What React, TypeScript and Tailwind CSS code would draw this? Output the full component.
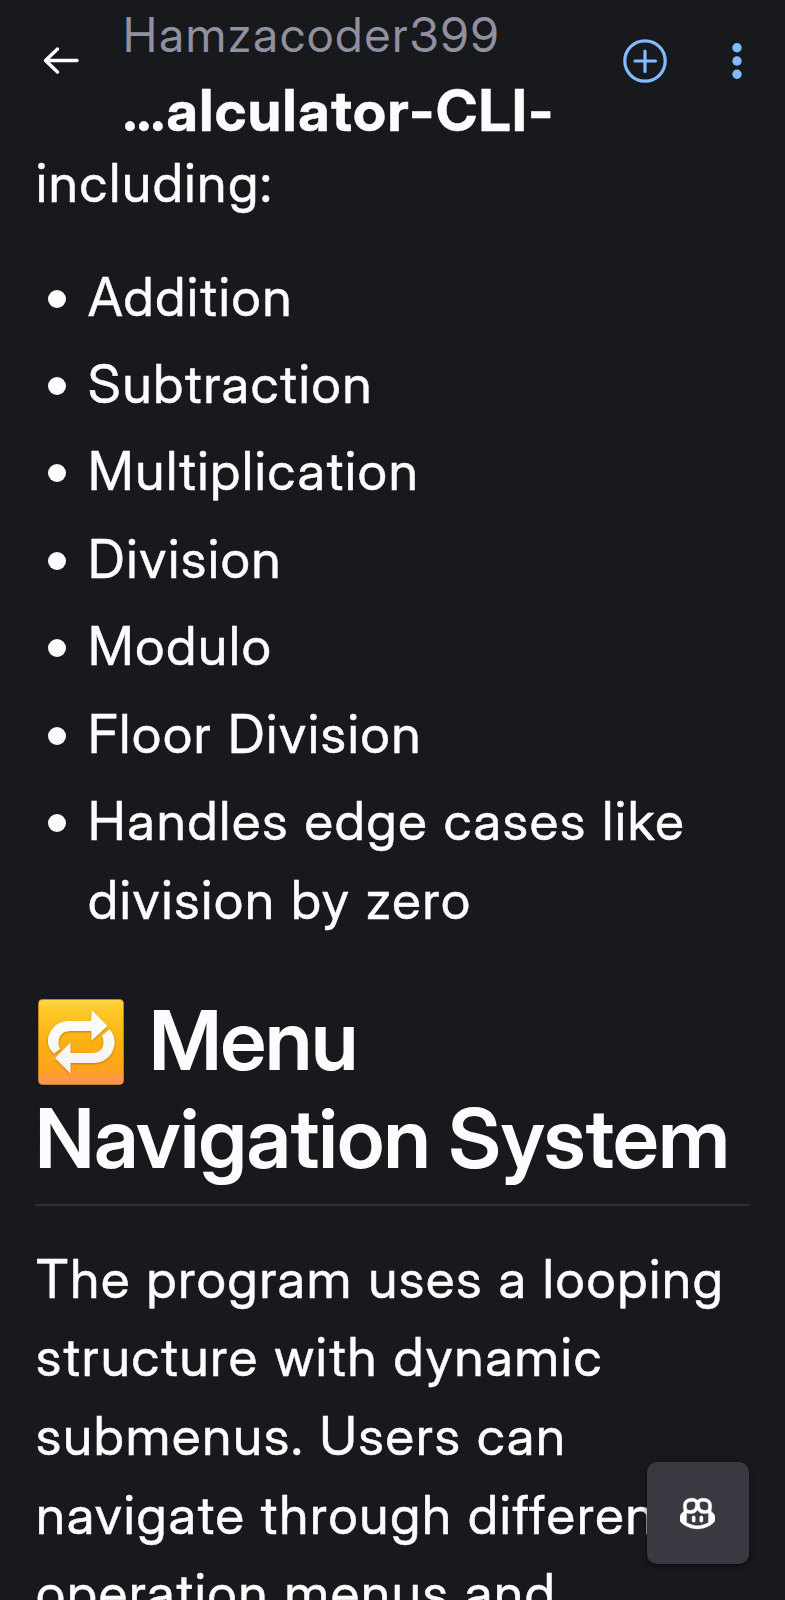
import React from "react";

const operations = [
  "Addition",
  "Subtraction",
  "Multiplication",
  "Division",
  "Modulo",
  "Floor Division",
  "Handles edge cases like division by zero",
];

function BackIcon() {
  return (
    <svg className="h-[30px] w-[38px]" viewBox="0 0 38 30" fill="none" stroke="#fff" strokeWidth="3.4" strokeLinecap="round" strokeLinejoin="round">
      <path d="M35 14.500H4M15.500 3 3.500 14.500l12 11.500" />
    </svg>
  );
}

function PlusCircleIcon() {
  return (
    <svg className="size-[44px]" viewBox="0 0 44 44" fill="none" stroke="#82bbff" strokeWidth="3.2">
      <circle cx="22" cy="22" r="20.2" />
      <path d="M22 12v20.500M12 22h20.500" strokeLinecap="round" />
    </svg>
  );
}

function KebabIcon() {
  return (
    <svg className="h-[38px] w-[10px]" viewBox="0 0 10 38" fill="#82bbff">
      <circle cx="5" cy="5.7" r="4.7" />
      <circle cx="5" cy="19" r="4.7" />
      <circle cx="5" cy="32.3" r="4.7" />
    </svg>
  );
}

function CopilotIcon() {
  return (
    <svg className="mr-[1px] size-[35px]" viewBox="0 0 16 16" fill="#fff" stroke="#fff" strokeWidth="0.15">
      <path d="M7.998 15.035c-4.562 0-7.873-2.914-7.998-3.749V9.338c.085-.628.677-1.686 1.588-2.065.013-.07.024-.143.036-.218.029-.183.06-.384.126-.612-.201-.508-.254-1.084-.254-1.656 0-.87.128-1.769.693-2.484.579-.733 1.494-1.124 2.724-1.261 1.206-.134 2.262.034 2.944.765.05.053.096.108.139.165.044-.057.094-.112.143-.165.682-.731 1.738-.899 2.944-.765 1.23.137 2.145.528 2.724 1.261.566.715.693 1.614.693 2.484 0 .572-.053 1.148-.254 1.656.066.228.098.429.126.612.012.076.024.148.037.218.924.385 1.522 1.471 1.591 2.095v1.872c0 .766-3.351 3.795-8.002 3.795Zm0-1.485c2.28 0 4.584-1.11 5.002-1.433V7.862l-.023-.116c-.49.21-1.075.291-1.727.291-1.146 0-2.059-.327-2.71-.991A3.222 3.222 0 0 1 8 6.303a3.24 3.24 0 0 1-.544.743c-.65.664-1.563.991-2.71.991-.652 0-1.236-.081-1.727-.291l-.023.116v4.255c.419.323 2.722 1.433 5.002 1.433ZM6.762 2.83c-.193-.206-.637-.413-1.682-.297-1.019.113-1.479.404-1.713.7-.247.312-.369.789-.369 1.554 0 .793.129 1.171.308 1.371.162.181.519.379 1.442.379.853 0 1.339-.235 1.638-.54.315-.322.527-.827.617-1.553.117-.935-.037-1.395-.241-1.614Zm4.155-.297c-1.044-.116-1.488.091-1.681.297-.204.219-.359.679-.242 1.614.091.726.303 1.231.618 1.553.299.305.784.54 1.638.54.922 0 1.28-.198 1.442-.379.179-.2.308-.578.308-1.371 0-.765-.123-1.242-.37-1.554-.233-.296-.693-.587-1.713-.7Z" />
      <path d="M6.25 9.037a.75.75 0 0 1 .75.75v1.501a.75.75 0 0 1-1.5 0V9.787a.75.75 0 0 1 .75-.75Zm4.25.75v1.501a.75.75 0 0 1-1.5 0V9.787a.75.75 0 0 1 1.5 0Z" />
    </svg>
  );
}

function RepeatEmoji() {
  return (
    <svg className="mt-[3px] size-[86px] shrink-0" viewBox="0 0 86 86" role="img" aria-label="repeat">
      <defs>
        <linearGradient id="tile" x1="0" y1="0" x2="0" y2="1">
          <stop offset="0" stopColor="#ffd54a" />
          <stop offset="0.12" stopColor="#ffca28" />
          <stop offset="0.5" stopColor="#fbb012" />
          <stop offset="0.82" stopColor="#ffa41c" />
          <stop offset="1" stopColor="#ff8f5e" />
        </linearGradient>
        <linearGradient id="arrow" x1="0" y1="12" x2="0" y2="74" gradientUnits="userSpaceOnUse">
          <stop offset="0" stopColor="#fff" />
          <stop offset="1" stopColor="#f1f1f1" />
        </linearGradient>
        <filter id="soft" x="-10%" y="-10%" width="120%" height="130%">
          <feDropShadow dx="0" dy="1" stdDeviation="1" floodColor="#8a5a00" floodOpacity="0.6" />
        </filter>
      </defs>
      <rect x="0.5" y="0.5" width="85" height="85" rx="4" fill="url(#tile)" stroke="#c98a1e" strokeWidth="0.8" />
      <g fill="url(#arrow)" filter="url(#soft)">
        <path d="M54 11.500 69.500 27 53.500 41.500V32H32C25 32 20.500 36.500 20.500 43.500C20.500 46 21 48 22 50L16 54.500C12 51 10 47 10 42.500C10 31 19 22 31 22H53Z" />
        <path d="M32.500 74.500 17 59 32.500 43.500V54H54.500C61 54 65.500 50 65.500 43.500C65.500 41 65 38.500 64 36.500L71.500 30.500C75 34 76.500 38 76.500 43C76.500 55 67.500 64 55.500 64H32.500Z" />
      </g>
    </svg>
  );
}

export default function App() {
  return (
    <div className="relative h-[1600px] w-[785px] overflow-hidden bg-[#18191d] text-[#fcfcfe] [font-family:'Inter_Display',Inter,sans-serif]">
      <header className="flex h-[157px] items-start border-b border-[#15161a] bg-[#18191d]">
        <div className="ml-[42px] mt-[46px] w-[81px] shrink-0">
          <BackIcon />
        </div>
        <div className="w-[500px] shrink-0 whitespace-nowrap pt-[6px]">
          <p className="text-[48px] font-normal leading-[58px] tracking-[2px] text-[#9090a0]">Hamzacoder399</p>
          <p className="mt-[18px] text-[57px] font-bold leading-[58px] tracking-[1.45px] [-webkit-text-stroke:0.4px_#fcfcfe]">…alculator-CLI-</p>
        </div>
        <div className="mt-[39px]">
          <PlusCircleIcon />
        </div>
        <div className="ml-[65px] mt-[42px]">
          <KebabIcon />
        </div>
      </header>

      <main className="-mt-[13px] px-[35px] text-[53px] leading-[78.6px] tracking-[1.85px] [-webkit-text-stroke:0.5px_#fcfcfe]">
        <p className="pl-[1px]">including:</p>
        <ul className="mt-[35px] flex flex-col gap-[8.8px]">
          {operations.map((operation) => (
            <li key={operation} className="flex">
              <span className="ml-[13px] mr-[22px] mt-[32px] size-[18px] shrink-0 rounded-full bg-[#fcfcfe]" />
              <span>{operation}</span>
            </li>
          ))}
        </ul>
        <h2 className="mt-[52px] border-b-2 border-[#2e2f33] pb-[16px] text-[82.5px] font-semibold leading-[98.3px] tracking-[-0.6px] [-webkit-text-stroke:0px]">
          <span className="flex h-[98.3px] items-center pl-[3px]">
            <RepeatEmoji />
            <span className="ml-[25px] tracking-[-1.2px]">Menu</span>
          </span>
          <span className="block whitespace-nowrap">Navigation System</span>
        </h2>
        <p className="mt-[34px] whitespace-nowrap pl-[1px]">
          The program uses a looping
          <br />
          structure with dynamic
          <br />
          submenus. Users can
          <br />
          navigate through different
          <br />
          operation menus and
        </p>
      </main>

      <button className="absolute left-[647px] top-[1462px] flex size-[102px] items-center justify-center rounded-[10px] bg-[#393a41] shadow-[0_2px_6px_rgba(0,0,0,0.5)]">
        <CopilotIcon />
      </button>
    </div>
  );
}
